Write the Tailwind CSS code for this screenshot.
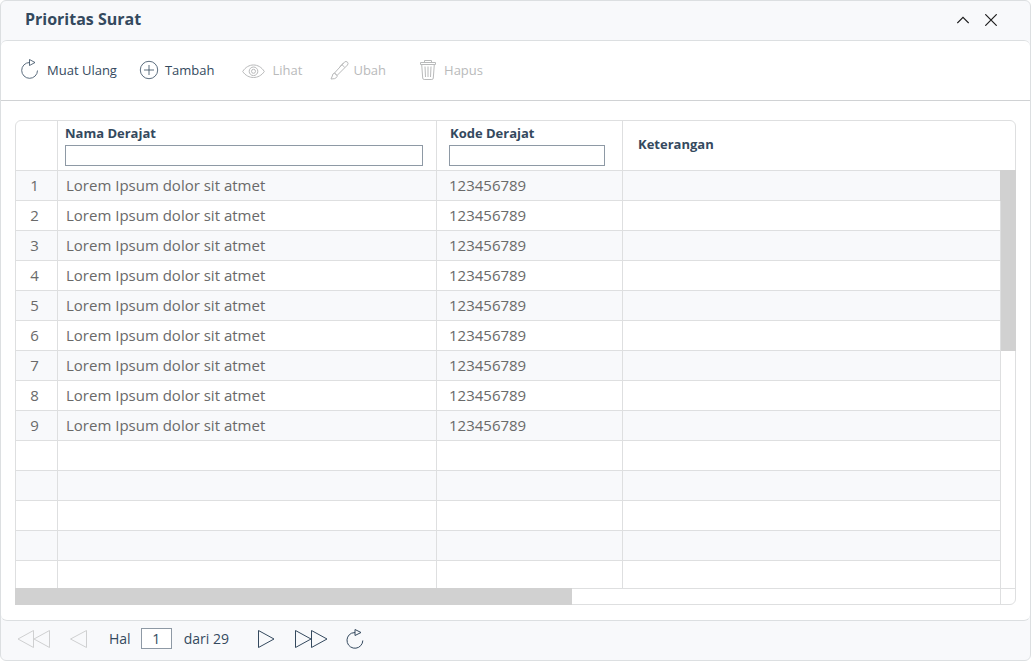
<!DOCTYPE html>
<html lang="id">
<head>
<meta charset="utf-8">
<title>Prioritas Surat</title>
<script src="https://cdn.jsdelivr.net/npm/@tailwindcss/browser@4"></script>
</head>
<body class="bg-white font-['Open_Sans','Noto_Sans',sans-serif] text-[#34495e]">
<main class="flex min-h-screen flex-col rounded-md border border-[#dcdfe1] bg-[#f8f9fb]">
  <header class="flex h-[39px] items-center justify-between pr-[33px] pb-0.5 pl-6">
    <h1 class="pb-0.5 text-base font-bold">Prioritas Surat</h1>
    <div class="flex gap-4 text-[#1c1c1c]">
      <button type="button" aria-label="Ciutkan"><svg class="h-3 w-3" viewBox="0 0 12 12" fill="none" stroke="currentColor" stroke-width="1.2"><path d="M.3 9 6 3.300 11.700 9"/></svg></button>
      <button type="button" aria-label="Tutup"><svg class="h-3 w-3" viewBox="0 0 12 12" fill="none" stroke="currentColor" stroke-width="1.2"><path d="M.3.3l11.400 11.400M11.700.3.3 11.700"/></svg></button>
    </div>
  </header>

  <section class="flex grow flex-col rounded-md border-y border-[#dcdfe1] bg-white">
    <nav class="flex h-[60px] items-center border-b border-[#d0d2d4] pl-5 text-[13px]">
      <button type="button" class="flex items-center gap-2">
        <svg class="mb-1 h-5 w-[18px]" viewBox="0 0 18 20" fill="none" stroke="currentColor" stroke-width=".8"><path d="M8.500 3.500A7.900 7.900 0 1 0 16.500 11.500M8.500.5V6.500L14 3.500Z"/></svg>
        Muat Ulang
      </button>
      <button type="button" class="ml-[22px] flex items-center gap-1.5">
        <svg class="mb-0.5 h-5 w-5" viewBox="0 0 20 20" fill="none" stroke="currentColor" stroke-width=".8"><circle cx="10" cy="10" r="8.700"/><path d="M10 5v10M5 10h10"/></svg>
        Tambah
      </button>
      <button type="button" disabled class="ml-[27px] flex items-center gap-2 text-[#b9babb]">
        <svg class="h-4 w-[23px]" viewBox="0 0 23 16" fill="none" stroke="currentColor"><path d="M.7 8.500C6-.2 17-.2 22.300 8.500 17 16.500 6 16.500.7 8.500Z"/><circle cx="11.500" cy="8.300" r="4.300"/><circle cx="11.500" cy="8.300" r="2"/></svg>
        Lihat
      </button>
      <button type="button" disabled class="ml-7 flex items-center gap-1 text-[#b9babb]">
        <svg class="mb-0.5 h-5 w-[19px]" viewBox="0 0 19 20" fill="none" stroke="currentColor"><path d="M4.500 13 14.500 2Q16 .8 17.500 2.200 18.600 3.500 17.500 5L7 15.500ZM12 4.700 14.700 7.300M13.500 3 10 6.500M4.500 13Q2.500 13.500 2.300 16L1 19Q5.500 19 6.500 17.500 7.500 16.500 7 15.500Z"/></svg>
        Ubah
      </button>
      <button type="button" disabled class="ml-[34px] flex items-center gap-2 text-[#b9babb]">
        <svg class="mb-0.5 h-5 w-4" viewBox="0 0 16 20" fill="none" stroke="currentColor"><path d="M.5 2.500h15v2H.5ZM4.500 2.500V.5h7v2M1.700 4.500 2.700 18Q2.800 19.500 4.200 19.500h7.600Q13.200 19.500 13.300 18l1-13.500M5 6.500l.5 10.500M8 6.500V17M11 6.500 10.500 17"/></svg>
        Hapus
      </button>
    </nav>

    <div class="px-[14px] pt-[19px] pb-[15px]">
      <div class="rounded-md border border-[#dedfe0]">
        <table class="w-full table-fixed border-separate border-spacing-0 text-[15px]">
          <colgroup><col class="w-[42px]"><col class="w-[379px]"><col class="w-[186px]"><col><col class="w-[14px]"></colgroup>
          <thead class="text-left text-[13px] leading-5">
            <tr class="h-[50px] [&>th]:border-b [&>th]:border-[#dedfe0] [&>th]:p-0">
              <th class="border-r"></th>
              <th class="border-r"><label for="nama" class="ml-[7px] block">Nama Derajat</label><input id="nama" class="mt-0.5 mb-0.5 ml-[7px] block h-[21px] w-[358px] border border-[#8e99a5] bg-white px-1 font-normal"></th>
              <th class="border-r"><label for="kode" class="ml-[13px] block">Kode Derajat</label><input id="kode" class="mt-0.5 mb-0.5 ml-3 block h-[21px] w-[156px] border border-[#8e99a5] bg-white px-1 font-normal"></th>
              <th colspan="2"><span class="ml-[15px] block pb-1">Keterangan</span></th>
            </tr>
          </thead>
          <tbody id="rows" class="text-[#6a6a6a]"></tbody>
        </table>
        <div class="flex h-[15px]" aria-hidden="true">
          <div class="grow"><div class="-mt-px -ml-px h-[17px] w-[557px] bg-[#d1d1d1]"></div></div>
          <div class="w-[15px] border-l border-[#dedfe0]"></div>
        </div>
      </div>
    </div>
  </section>

  <footer class="flex h-[39px] items-center pb-1 pl-4 text-sm">
    <button type="button" disabled aria-label="Halaman pertama" class="text-[#cfd0d1]"><svg class="h-5 w-[34px]" viewBox="0 0 34 20" fill="none" stroke="currentColor"><path d="M16.500 1.500v17L1 10ZM32.500 1.500v17L17 10Z"/></svg></button>
    <button type="button" disabled aria-label="Halaman sebelumnya" class="ml-[18px] text-[#cfd0d1]"><svg class="h-5 w-[18px]" viewBox="0 0 18 20" fill="none" stroke="currentColor"><path d="M17.500 1.500v17L1.500 10Z"/></svg></button>
    <label for="hal" class="ml-[22px]">Hal</label>
    <input id="hal" value="1" class="ml-[10px] h-[21px] w-[31px] border border-[#8e99a5] bg-white text-center">
    <span class="ml-3">dari 29</span>
    <button type="button" aria-label="Halaman berikutnya" class="ml-7"><svg class="h-5 w-[18px]" viewBox="0 0 18 20" fill="none" stroke="currentColor"><path d="M1.500 1.500v17L17 10Z"/></svg></button>
    <button type="button" aria-label="Halaman terakhir" class="ml-[19px]"><svg class="h-5 w-[34px]" viewBox="0 0 34 20" fill="none" stroke="currentColor"><path d="M1.500 1.500v17L17 10ZM17.500 1.500v17L33 10Z"/></svg></button>
    <button type="button" aria-label="Muat ulang" class="ml-[18px]"><svg class="h-5 w-[18px]" viewBox="0 0 18 20" fill="none" stroke="currentColor"><path d="M5.500 4.200A7.900 7.900 0 1 0 16.800 11.500M5.500 4.200L9 3.500M9 .5V6.500L15 3.500Z"/></svg></button>
  </footer>
</main>
<script>
const total = 14, filled = 9;
let html = '';
for (let i = 0; i < total; i++) {
  const has = i < filled;
  html += `<tr class="${i === total - 1 ? 'h-7' : 'h-[30px]'} ${i % 2 ? 'bg-white' : 'bg-[#f8f9fb]'}">
    <td class="border-r border-b border-[#dedfe0] p-0 pr-1 pb-0.5 text-center leading-5">${has ? i + 1 : ''}</td>
    <td class="border-r border-b border-[#dedfe0] p-0 pb-0.5 pl-2 leading-5">${has ? 'Lorem Ipsum dolor sit atmet' : ''}</td>
    <td class="border-r border-b border-[#dedfe0] p-0 pb-0.5 pl-3 leading-5">${has ? '123456789' : ''}</td>
    <td class="border-r border-b border-[#dedfe0] p-0"></td>
    ${i === 0 ? `<td rowspan="${total}" aria-hidden="true" class="border-b border-[#dedfe0] bg-white p-0 align-top"><div class="-mt-px -mr-px -ml-px h-[181px] bg-[#d1d1d1]"></div></td>` : ''}
  </tr>`;
}
document.getElementById('rows').innerHTML = html;
</script>
</body>
</html>
